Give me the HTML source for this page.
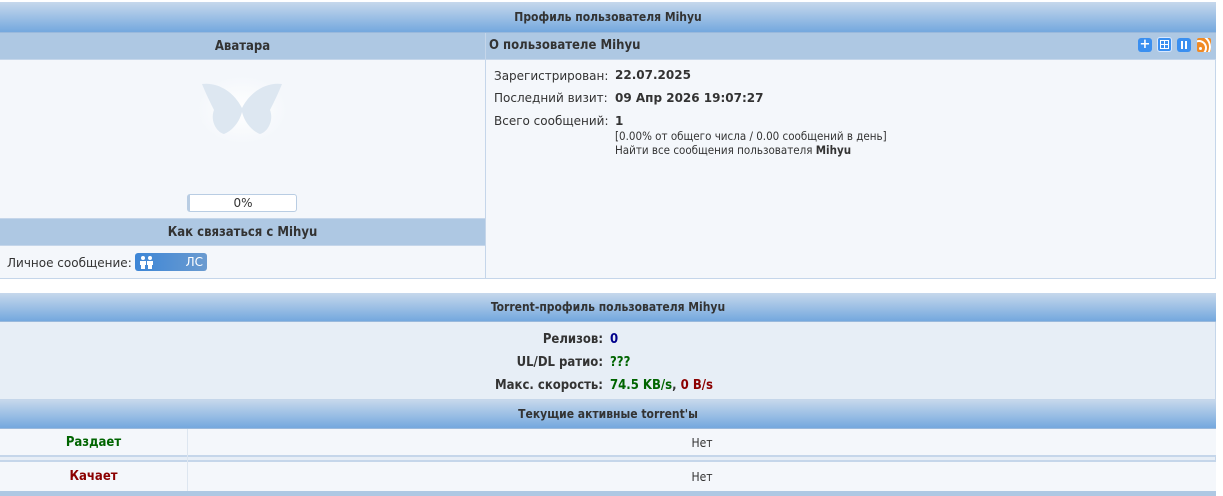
<!DOCTYPE html>
<html><head><meta charset="utf-8"><style>
*{margin:0;padding:0;box-sizing:border-box}
body{width:1223px;height:496px;background:#fff;font-family:"DejaVu Sans",Verdana,"Liberation Sans",sans-serif;font-size:12px;color:#333;position:relative;overflow:hidden}
.a{position:absolute}
.hg{background:linear-gradient(#c6d8ec,#74a8de);border-bottom:1px solid #9ab9dc;text-align:center;font-weight:bold;color:#333}
.hs{background:#aec8e3;border-bottom:1px solid #c5d6ea;font-weight:bold;color:#333}
.lt{background:#f4f7fb}
.c{font-family:"DejaVu Sans Condensed","DejaVu Sans",sans-serif}
</style></head><body>
<div class="a" style="left:0;top:2px;width:1216px;height:277px;border-right:1px solid #c5d6ea;border-bottom:1px solid #c5d6ea;background:#f4f7fb"></div>
<div class="a hg c" style="left:0;top:2px;width:1216px;height:31px;line-height:31px;font-size:12px">Профиль пользователя Mihyu</div>
<div class="a hs c" style="left:0;top:33px;width:485px;height:27px;line-height:27px;text-align:center;font-size:13px">Аватара</div>
<div class="a hs c" style="left:486px;top:33px;width:730px;height:27px;line-height:26px;padding-left:3px;font-size:13px">О пользователе Mihyu</div>
<div class="a" style="left:485px;top:33px;width:1px;height:246px;background:#c5d6ea"></div>
<div class="a" style="left:1138px;top:38px;width:14px;height:14px;border-radius:3px;background:#3a8ff0;color:#fff;font-weight:bold;font-size:13px;line-height:14px;text-align:center">+</div>
<div class="a" style="left:1157px;top:37px;width:15px;height:15px;border-radius:3px;background:#3a8ff0;border:1px solid #d8e8ff"><div class="a" style="left:2px;top:2px;width:9px;height:9px;border:1px solid #fff"></div><div class="a" style="left:6px;top:3px;width:1px;height:7px;background:#fff"></div><div class="a" style="left:3px;top:6px;width:7px;height:1px;background:#fff"></div></div>
<div class="a" style="left:1177px;top:38px;width:14px;height:14px;border-radius:3px;background:#3a8ff0"><div class="a" style="left:4px;top:3px;width:2px;height:8px;background:#fff"></div><div class="a" style="left:8px;top:3px;width:2px;height:8px;background:#fff"></div></div>
<div class="a" style="left:1197px;top:38px;width:14px;height:14px;border-radius:2px;background:#f08a24;overflow:hidden"><div class="a" style="left:2px;top:9px;width:3px;height:3px;border-radius:50%;background:#fff"></div><div class="a" style="left:-6px;top:2px;width:16px;height:16px;border-radius:50%;border:2px solid #fff"></div><div class="a" style="left:-12px;top:-4px;width:26px;height:26px;border-radius:50%;border:2px solid #fff"></div></div>
<svg class="a" style="left:190px;top:70px" width="104" height="72" viewBox="0 0 104 72"><defs><radialGradient id="g"><stop offset="0" stop-color="#fff"/><stop offset="1" stop-color="#f4f7fb"/></radialGradient></defs><ellipse cx="52" cy="40" rx="45" ry="34" fill="url(#g)"/><path d="M52 38 C44 22 28 12 12 14 C16 24 20 32 24 40 C20 50 26 62 34 64 C44 60 50 50 52 42 C54 50 60 60 70 64 C78 62 84 50 80 40 C84 32 88 24 92 14 C76 12 60 22 52 38Z" fill="#dde7f1"/></svg>
<div class="a" style="left:187px;top:194px;width:110px;height:18px;border:1px solid #b9cde3;border-left:3px solid #b9cde3;border-radius:3px;background:#fff;text-align:center;line-height:16px;font-size:12px">0%</div>
<div class="a hs c" style="left:0;top:218px;width:485px;height:28px;line-height:28px;text-align:center;font-size:13px;border-top:1px solid #c5d6ea">Как связаться с Mihyu</div>
<div class="a" style="left:7px;top:256px;font-size:12px">Личное сообщение:</div>
<div class="a" style="left:135px;top:253px;width:72px;height:18px;border-radius:3px;background:linear-gradient(90deg,#3d86d6,#6b9bd0);color:#fff;font-size:12px;line-height:18px;text-align:right;padding-right:4px">ЛС
<svg class="a" style="left:4px;top:3px" width="16" height="13" viewBox="0 0 16 13"><circle cx="4" cy="2" r="2" fill="#fff"/><circle cx="11" cy="2" r="2" fill="#fff"/><path d="M1 5h6v4H6v4H2V9H1z M8 5h6v4h-1v4H9V9H8z" fill="#fff"/></svg></div>
<div class="a" style="left:494px;top:68px;font-size:12px;line-height:16px">Зарегистрирован:</div>
<div class="a" style="left:615px;top:68px;font-size:12px;font-weight:bold">22.07.2025</div>
<div class="a" style="left:494px;top:91px;font-size:12px">Последний визит:</div>
<div class="a" style="left:615px;top:91px;font-size:12px;font-weight:bold">09 Апр 2026 19:07:27</div>
<div class="a" style="left:494px;top:114px;font-size:12px">Всего сообщений:</div>
<div class="a" style="left:615px;top:114px;font-size:12px;font-weight:bold">1</div>
<div class="a c" style="left:615px;top:129px;font-size:11.5px;line-height:14px">[0.00% от общего числа / 0.00 сообщений в день]<br>Найти все сообщения пользователя <b>Mihyu</b></div>
<div class="a" style="left:0;top:293px;width:1216px;height:203px;border-right:1px solid #c5d6ea;background:#e7eef6"></div>
<div class="a hg c" style="left:0;top:293px;width:1216px;height:29px;line-height:29px">Torrent-профиль пользователя Mihyu</div>
<div class="a c" style="left:0;top:328px;width:603px;text-align:right;font-weight:bold;line-height:23px;font-size:13px">Релизов:<br>UL/DL ратио:<br>Макс. скорость:</div>
<div class="a c" style="left:610px;top:328px;font-weight:bold;line-height:23px;font-size:13px"><span style="color:#00008b">0</span><br><span style="color:#006400">???</span><br><span style="color:#006400">74.5 KB/s</span>, <span style="color:#8b0000">0 B/s</span></div>
<div class="a hg c" style="left:0;top:399px;width:1216px;height:30px;line-height:29px;border-top:1px solid #c5d6ea">Текущие активные torrent'ы</div>
<div class="a lt" style="left:0;top:429px;width:1216px;height:28px;border-bottom:2px solid #c5d6ea"></div>
<div class="a" style="left:0;top:460px;width:1216px;height:2px;background:#c5d6ea"></div>
<div class="a lt" style="left:0;top:462px;width:1216px;height:29px"></div>
<div class="a" style="left:0;top:491px;width:1216px;height:5px;background:#aec8e3"></div>
<div class="a" style="left:187px;top:429px;width:1px;height:62px;background:#dde6f0"></div>
<div class="a c" style="left:0;top:435px;width:187px;text-align:center;font-weight:bold;color:#006400;font-size:13px">Раздает</div>
<div class="a c" style="left:0;top:469px;width:187px;text-align:center;font-weight:bold;color:#8b0000;font-size:13px">Качает</div>
<div class="a c" style="left:188px;top:436px;width:1028px;text-align:center;font-size:12px">Нет</div>
<div class="a c" style="left:188px;top:470px;width:1028px;text-align:center;font-size:12px">Нет</div>
</body></html>
